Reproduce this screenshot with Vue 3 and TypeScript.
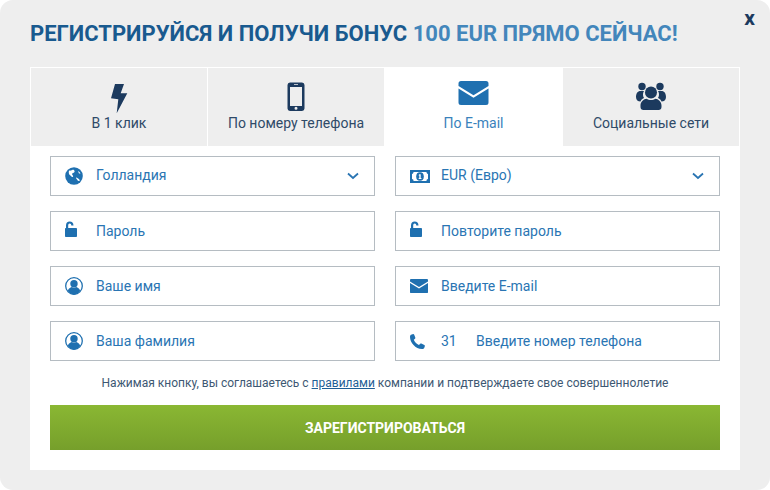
<script setup lang="ts">
interface Tab { id: string; label: string; active?: boolean }
const tabs: Tab[] = [
  { id: 'bolt', label: 'В 1 клик' },
  { id: 'phone', label: 'По номеру телефона' },
  { id: 'mail', label: 'По E-mail', active: true },
  { id: 'people', label: 'Социальные сети' },
]
interface Field { icon: string; text: string; code?: string; select?: boolean }
const fields: Field[] = [
  { icon: 'globe', text: 'Голландия', select: true },
  { icon: 'money', text: 'EUR (Евро)', select: true },
  { icon: 'lock', text: 'Пароль' },
  { icon: 'lock', text: 'Повторите пароль' },
  { icon: 'user', text: 'Ваше имя' },
  { icon: 'mail', text: 'Введите E-mail' },
  { icon: 'user', text: 'Ваша фамилия' },
  { icon: 'tel', text: 'Введите номер телефона', code: '31' },
]
</script>

<template>
  <div class="modal">
    <div class="close">x</div>
    <h1 class="title">РЕГИСТРИРУЙСЯ И ПОЛУЧИ БОНУС <span class="accent">100 EUR ПРЯМО СЕЙЧАС!</span></h1>
    <div class="card">
      <div class="tabs">
        <div v-for="t in tabs" :key="t.id" class="tab" :class="{ active: t.active }">
          <div class="tab-icon">
            <svg v-if="t.id === 'bolt'" class="i-bolt" width="17" height="30" viewBox="0 0 17 30">
              <path d="M4 0H13L9.700 9.300H16.300L5.700 29.300L7.300 15.300L0 14.300Z" fill="currentColor" />
            </svg>
            <svg v-else-if="t.id === 'phone'" width="18" height="30" viewBox="0 0 18 30">
              <path fill-rule="evenodd" d="M3 .5H15A2.600 2.600 0 0 1 17.500 3V26.500A2.600 2.600 0 0 1 15 29H3A2.600 2.600 0 0 1 .5 26.500V3A2.600 2.600 0 0 1 3 .5ZM3 5V24H15V5ZM7 2.300V3.100H11V2.300ZM9 24.800A1.500 1.500 0 1 0 9 27.800A1.500 1.500 0 1 0 9 24.800Z" fill="currentColor" />
            </svg>
            <svg v-else-if="t.id === 'mail'" class="i-mail" width="31" height="24" viewBox="0 0 30 24">
              <path d="M2.500 0H27.500A2.500 2.500 0 0 1 30 2.500V5L15 14.200L0 5V2.500A2.500 2.500 0 0 1 2.500 0Z" fill="currentColor" />
              <path d="M0 7.500L15 16.700L30 7.500V21.500A2.500 2.500 0 0 1 27.500 24H2.500A2.500 2.500 0 0 1 0 21.500Z" fill="currentColor" />
            </svg>
            <svg v-else width="30" height="28" viewBox="0 0 30 28">
              <g fill="currentColor">
                <circle cx="6" cy="4.500" r="3.700" />
                <circle cx="24" cy="4.500" r="3.700" />
                <path d="M0 15C0 10.500 2.500 9 4.500 9H8C6.500 11.500 6.800 14 8 16C6 17 5 18 4.500 19.500C2 19.500 0 18 0 15Z" />
                <path d="M30 15C30 10.500 27.500 9 25.500 9H22C23.500 11.500 23.200 14 22 16C24 17 25 18 25.500 19.500C28 19.500 30 18 30 15Z" />
                <circle cx="15" cy="10.500" r="6" />
                <path d="M4.500 23.500C4.500 19.500 8 17 10.500 16.800C13 18.400 17 18.400 19.500 16.800C22 17 25.500 19.500 25.500 23.500V25C25.500 26.800 24.300 28 22.500 28H7.500C5.700 28 4.500 26.800 4.500 25Z" />
              </g>
            </svg>
          </div>
          <div class="tab-label">{{ t.label }}</div>
        </div>
      </div>
      <div class="body">
        <div class="grid">
          <div v-for="f in fields" :key="f.text" class="field">
            <span class="ficon">
              <svg v-if="f.icon === 'globe'" width="18" height="18" viewBox="0 0 18 18">
                <circle cx="9" cy="9" r="8.800" fill="currentColor" />
                <path d="M4 3.500C5.500 4 7 3.200 8 2.500C9 3 10 4 9.500 5C9 6 7.500 5.800 7 7C7.500 8.500 8.500 8.500 8 10C7 10.500 5.500 8.500 4.500 7.800C3.800 7 3.600 5 4 3.500Z" fill="#fff" />
                <path d="M11 10.500C12 10.500 14.500 12 15 13.500C14 14.200 13 14 12.500 13.200C12 12.500 11 11.500 11 10.500Z" fill="#fff" />
                <path d="M13 4C14 4.500 15 5.500 15.500 6.500L14 6.500Z" fill="#fff" />
              </svg>
              <svg v-else-if="f.icon === 'money'" width="20" height="13" viewBox="0 0 20 13">
                <path fill-rule="evenodd" d="M0 0H20V13H0ZM3.500 2C3.500 3.200 3 3.800 2 3.900V9.100C3 9.200 3.500 9.800 3.500 11H16.500C16.500 9.800 17 9.200 18 9.100V3.900C17 3.800 16.500 3.200 16.500 2Z" fill="currentColor" />
                <ellipse cx="10" cy="6.500" rx="3.800" ry="4.300" fill="currentColor" />
                <path d="M9.300 4.300H10.700V8H11.400V9H8.700V8H9.300V5.500H8.700V5Z" fill="#fff" />
              </svg>
              <svg v-else-if="f.icon === 'lock'" class="i-lock" width="12" height="16" viewBox="0 0 12 16">
                <path d="M1 7V4.500C1 2 2.400 .5 4.700 .5S8.500 2 8.500 4.500H6.300C6.300 3.200 5.700 2.500 4.700 2.500S3.200 3.200 3.200 4.500V7H11C11.500 7 12 7.400 12 8V15C12 15.600 11.500 16 11 16H1C.5 16 0 15.600 0 15V8C0 7.400 .5 7 1 7Z" fill="currentColor" />
              </svg>
              <svg v-else-if="f.icon === 'user'" width="18" height="18" viewBox="0 0 18 18">
                <circle cx="9" cy="9" r="8.300" fill="none" stroke="currentColor" stroke-width="1.300" />
                <circle cx="9" cy="6.800" r="3.700" fill="currentColor" />
                <path d="M2.800 14C3.400 11.500 5.300 10.300 6.800 10C8 11 10 11 11.200 10C12.700 10.300 14.600 11.500 15.200 14C13.800 16 11.500 17.400 9 17.400S4.200 16 2.800 14Z" fill="currentColor" />
              </svg>
              <svg v-else-if="f.icon === 'mail'" width="18" height="14" viewBox="0 0 18 14">
                <path d="M.5 0H17.500L18 .5V2.500L9 8L0 2.500V.5Z" fill="currentColor" />
                <path d="M0 4L9 9.500L18 4V13.500L17.500 14H.5L0 13.500Z" fill="currentColor" />
              </svg>
              <svg v-else width="15" height="15" viewBox="0 0 15 15">
                <path d="M1 .8L3.200 0C3.700 0 4 .3 4.200 .7L5.300 3.500C5.500 4 5.300 4.400 5 4.700L3.800 5.800C4.500 7.800 6.500 10 9 11L10.200 9.800C10.500 9.500 11 9.400 11.400 9.600L14.300 10.900C14.800 11.100 15 11.500 14.900 12L14.200 14C13.900 14.700 13 15 12 15C5.500 15 0 8.500 0 3C0 2 .3 1.200 1 .8Z" fill="currentColor" />
              </svg>
            </span>
            <span v-if="f.code" class="code">{{ f.code }}</span>
            <span class="ftext" :class="{ raised: f.select }">{{ f.text }}</span>
            <svg v-if="f.select" class="chev" width="12" height="8" viewBox="0 0 12 8">
              <path d="M1 1.500L6 6L11 1.500" fill="none" stroke="currentColor" stroke-width="1.800" />
            </svg>
          </div>
        </div>
        <p class="agree">Нажимая кнопку, вы соглашаетесь с <a class="rules">правилами</a> компании и подтверждаете свое совершеннолетие</p>
        <button class="submit" type="button">ЗАРЕГИСТРИРОВАТЬСЯ</button>
      </div>
    </div>
  </div>
</template>

<style>
html, body { margin: 0; background: #fff; }
</style>

<style scoped>
.modal {
  position: relative;
  box-sizing: border-box;
  width: 770px;
  height: 490px;
  padding: 0 30px 20px;
  background: #eee;
  border-radius: 13px;
  font-family: Roboto, "Liberation Sans", sans-serif;
  overflow: hidden;
}
.close {
  position: absolute;
  top: 5px;
  right: 15px;
  font-size: 21px;
  line-height: 26px;
  font-weight: 700;
  color: #1c3a5e;
}
.title {
  margin: 0;
  box-sizing: border-box;
  padding-top: 20px;
  height: 67px;
  font-size: 22px;
  line-height: 28px;
  font-weight: 700;
  color: #195a8f;
  white-space: nowrap;
}
.accent { color: #4386bb; }
.card { background: #fff; height: 403px; }
.tabs {
  display: grid;
  grid-template-columns: 177px 177px 178px 176px;
  height: 79px;
  box-sizing: border-box;
  border: 1px solid #fff;
  border-bottom: 0;
}
.tab {
  background: #eee;
  color: #1c3a5e;
  text-align: center;
  border-right: 1px solid #fff;
  display: flex;
  flex-direction: column;
  align-items: center;
}
.tab:last-child { border-right: 0; }
.tab.active { background: #fff; color: #1f70b0; }
.tab-icon {
  height: 30px;
  margin-top: 14px;
  display: flex;
  align-items: flex-start;
  justify-content: center;
}
.i-bolt { margin-top: 2px; }
.i-mail { margin-top: -1px; }
.tab-label {
  margin-top: 1px;
  font-size: 14px;
  line-height: 20px;
  color: #2f4a68;
}
.tab.active .tab-label { color: #3a82bc; }
.body { padding: 10px 20px 0; }
.grid {
  display: grid;
  grid-template-columns: 325px 325px;
  column-gap: 20px;
  row-gap: 15px;
}
.field {
  box-sizing: border-box;
  height: 40px;
  border: 1px solid #b5bcc2;
  display: flex;
  align-items: center;
  padding-left: 14px;
  padding-right: 15px;
  color: #2a75b3;
  font-size: 14px;
}
.ficon {
  width: 31px;
  flex: none;
  display: flex;
  align-items: center;
  color: #1f70b0;
}
.i-lock { margin-top: -4px; }
.code { width: 35px; flex: none; }
.ftext { flex: 1; }
.ftext.raised { padding-bottom: 2px; }
.chev { flex: none; color: #2a75b3; }
.agree {
  margin: 14px 0 0;
  height: 20px;
  font-size: 12px;
  line-height: 16px;
  color: #3d5873;
  text-align: center;
}
.rules { color: #1f5f96; text-decoration: underline; }
.submit {
  display: block;
  width: 670px;
  height: 45px;
  margin-top: 10px;
  border: 0;
  padding: 0;
  background: linear-gradient(#8ab733, #769f2b);
  color: #fff;
  font-family: inherit;
  font-size: 14px;
  font-weight: 700;
}
</style>
